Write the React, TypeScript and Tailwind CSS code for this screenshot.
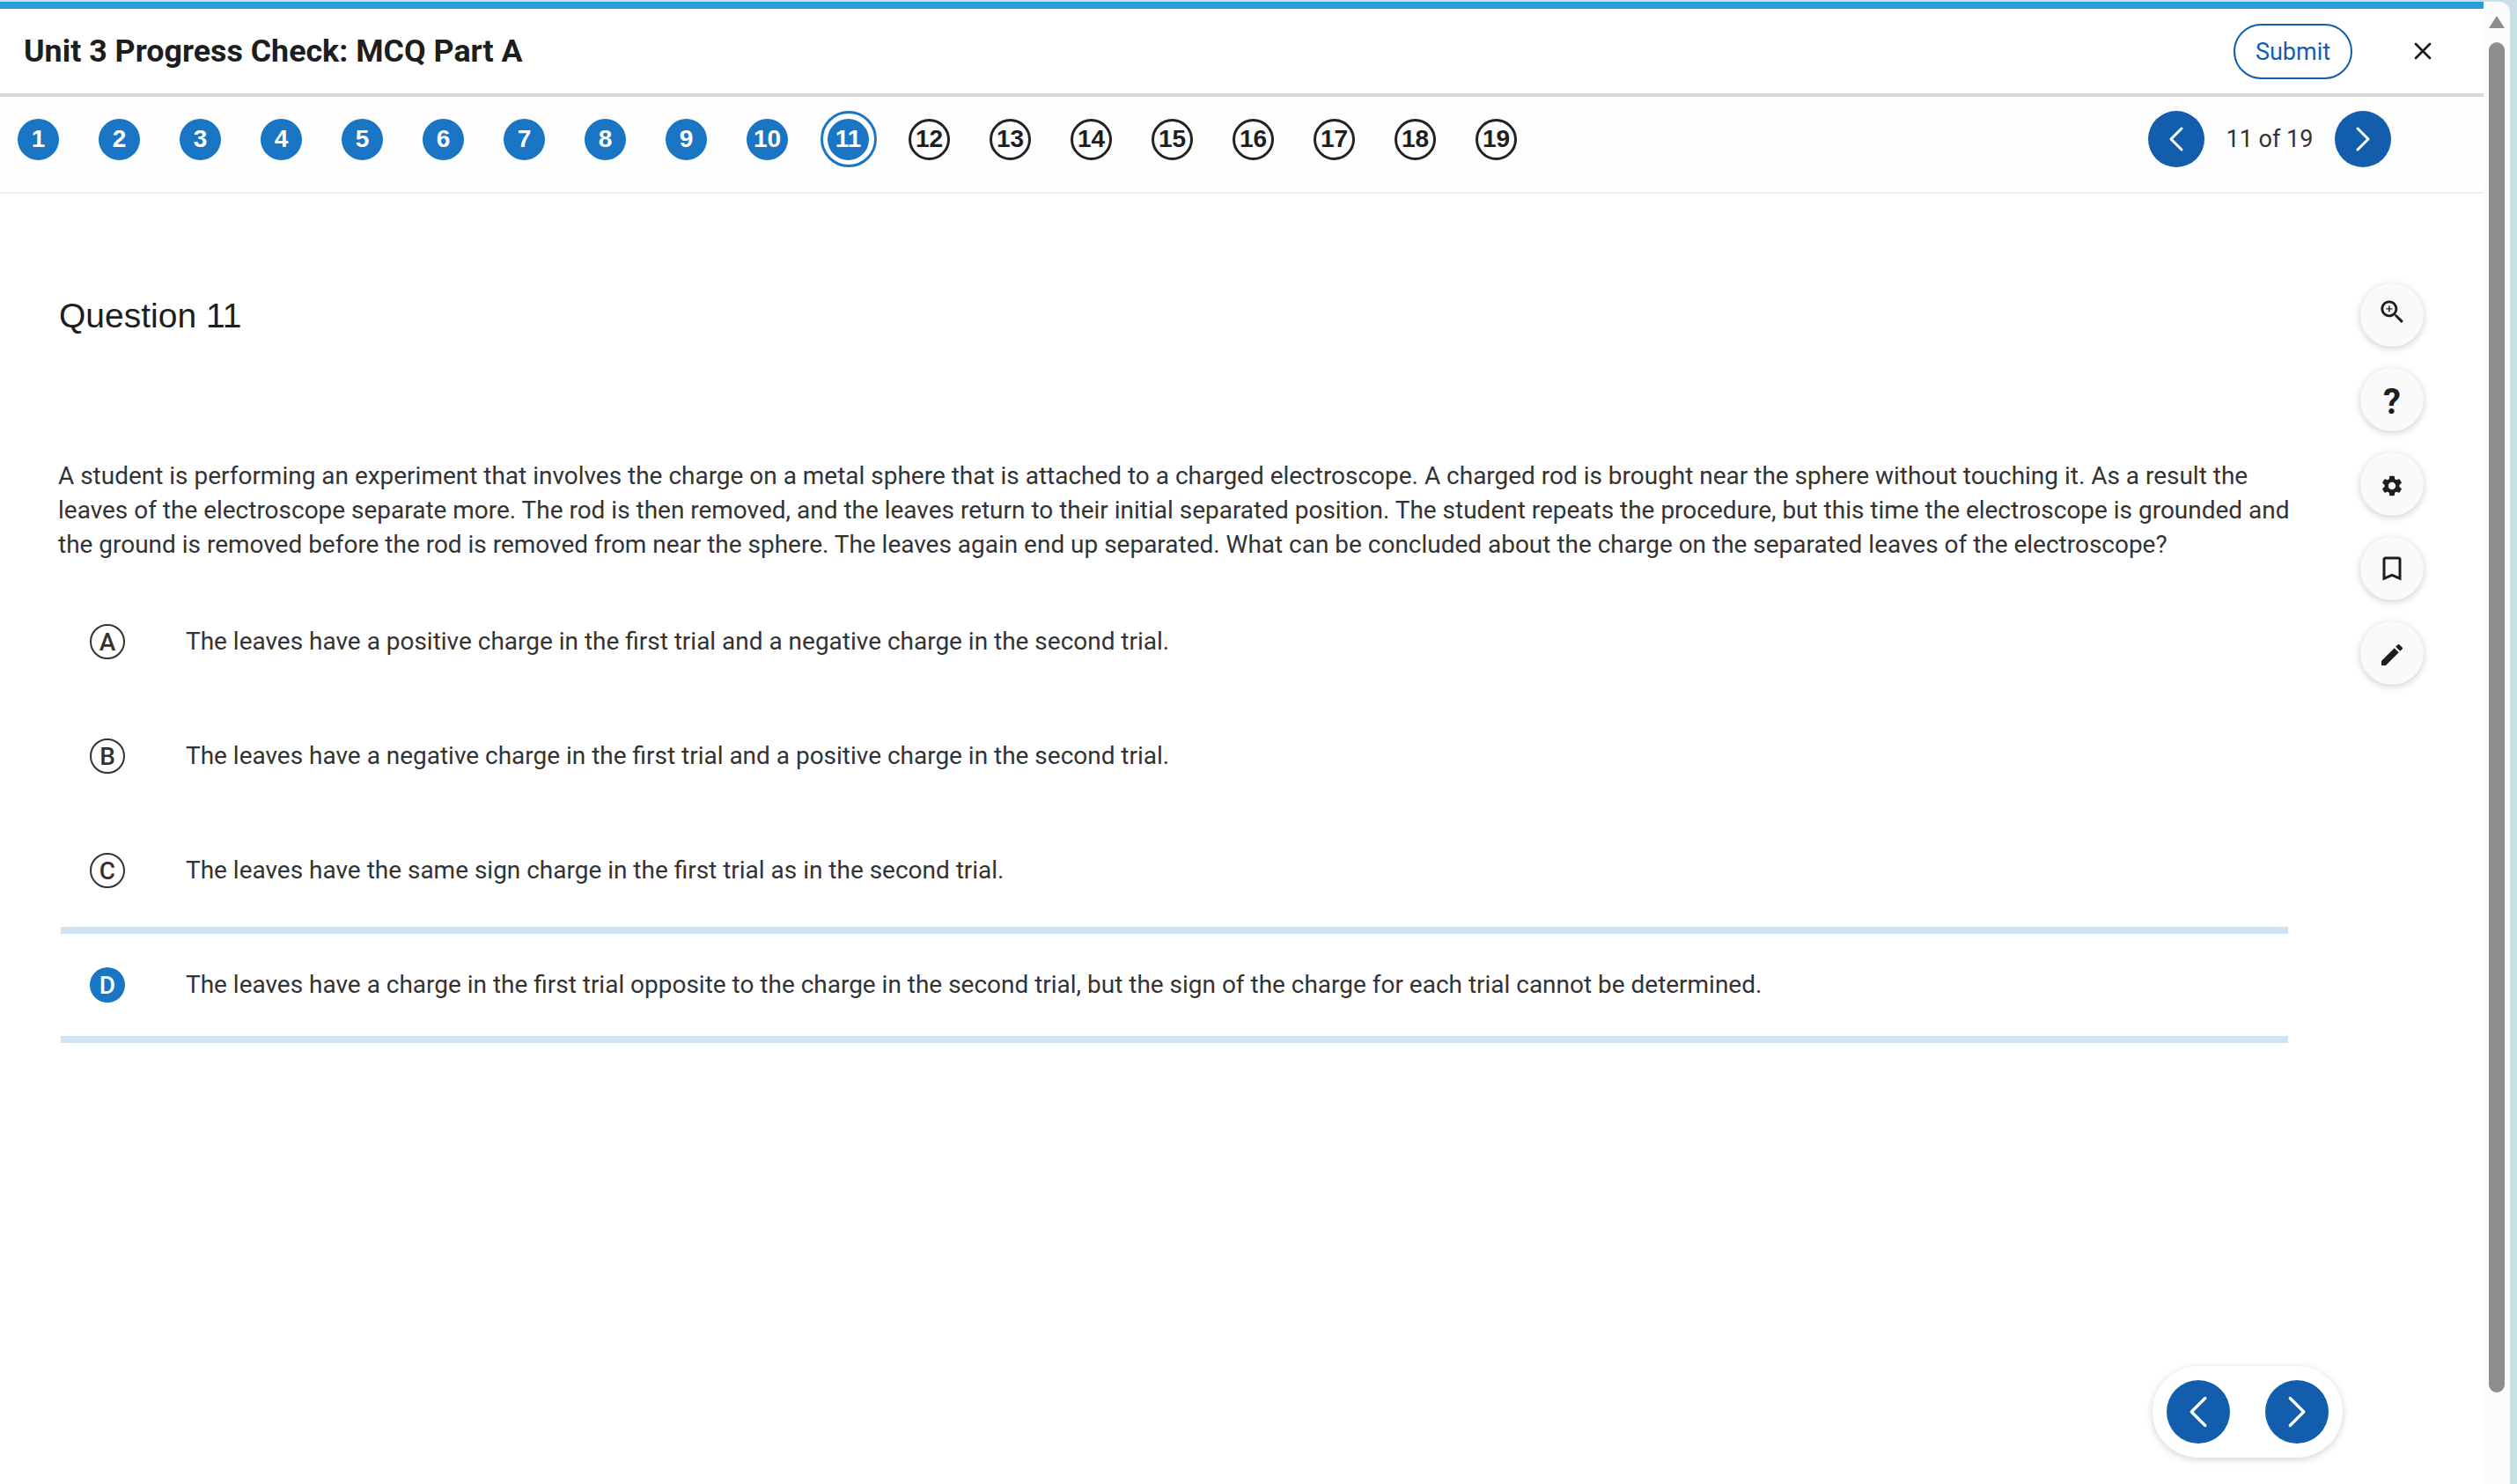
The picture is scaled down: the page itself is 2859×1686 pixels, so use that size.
import { ChevronLeft, ChevronRight, X } from "lucide-react";

const answers = [
  { letter: "A", text: "The leaves have a positive charge in the first trial and a negative charge in the second trial." },
  { letter: "B", text: "The leaves have a negative charge in the first trial and a positive charge in the second trial." },
  { letter: "C", text: "The leaves have the same sign charge in the first trial as in the second trial." },
  {
    letter: "D",
    text: "The leaves have a charge in the first trial opposite to the charge in the second trial, but the sign of the charge for each trial cannot be determined.",
  },
];

const Bubble = ({ n }: { n: number }) => {
  if (n === 11) {
    return (
      <div className="flex h-[64px] w-[64px] shrink-0 items-center justify-center rounded-full border-[3px] border-[#1a75c4] bg-white">
        <div className="flex h-[47px] w-[47px] items-center justify-center rounded-full bg-[#1a75c4] text-white">{n}</div>
      </div>
    );
  }
  return (
    <div
      className={
        n < 11
          ? "flex h-[47px] w-[47px] items-center justify-center rounded-full bg-[#1a75c4] text-white"
          : "flex h-[47px] w-[47px] items-center justify-center rounded-full border-[3px] border-[#222] text-[#1e1e1e]"
      }
    >
      {n}
    </div>
  );
};

const ToolButton = ({ children }: { children: React.ReactNode }) => (
  <div className="flex h-[72px] w-[72px] items-center justify-center rounded-full bg-[#fafafa] text-[#1e1e1e] shadow-[0_2px_8px_rgba(0,0,0,0.2)]">
    {children}
  </div>
);

export default function App() {
  return (
    <div className="flex h-[1686px] w-[2859px] overflow-hidden bg-[#c8dfe5] pt-[2px] font-['Roboto',sans-serif]">
      <div className="flex w-[2821px] flex-col bg-white">
        <div className="h-[8px] bg-[#2a9bdc]" />
        <div className="flex h-[96px] items-center justify-between pl-[27px]">
          <h1 className="pt-[2px] text-[35.8px] font-bold text-[#1e1e1e]">Unit 3 Progress Check: MCQ Part A</h1>
          <div className="flex items-center">
            <div className="flex h-[63px] w-[135px] items-center justify-center rounded-full border-2 border-[#125ead] pt-[2px] text-[27px] text-[#125ead]">
              Submit
            </div>
            <X className="mr-[53px] ml-[64px] text-[#1e1e1e]" size={32} strokeWidth={2} />
          </div>
        </div>
        <div className="h-[4px] bg-[#d8d8d8]" />
        <div className="flex h-[99px] items-center justify-between bg-[#fdfdfd] pr-[105px] pb-[3px] pl-[20px]">
          <div className="flex w-[1719px] items-center gap-[45px] font-['Liberation_Sans',sans-serif] text-[28px] font-bold">
            {Array.from({ length: 19 }, (_, i) => i + 1).map((n) => (
              <div className="flex w-[47px] justify-center" key={n}>
                <Bubble n={n} />
              </div>
            ))}
          </div>
          <div className="flex items-center">
            <div className="flex h-[64px] w-[64px] items-center justify-center rounded-full bg-[#125ead] text-white">
              <ChevronLeft size={48} strokeWidth={1.5} />
            </div>
            <span className="w-[148px] pt-[1px] text-center text-[27px] text-[#333]">11 of 19</span>
            <div className="flex h-[64px] w-[64px] items-center justify-center rounded-full bg-[#125ead] text-white">
              <ChevronRight size={48} strokeWidth={1.5} />
            </div>
          </div>
        </div>
        <div className="mt-[9px] h-[2px] bg-[#eeeeee]" />
        <div className="relative flex-1">
          <div className="w-[2612px] pt-[112px] pl-[66px]">
            <h2 className="ml-[1px] font-['Liberation_Sans',sans-serif] text-[39px] leading-[54px] text-[#1e1e1e]">Question 11</h2>
            <p className="mt-[135px] text-[27.98px] leading-[39px] text-[#333]">
              A student is performing an experiment that involves the charge on a metal sphere that is attached to a charged
              electroscope. A charged rod is brought near the sphere without touching it. As a result the leaves of the
              electroscope separate more. The rod is then removed, and the leaves return to their initial separated position.
              The student repeats the procedure, but this time the electroscope is grounded and the ground is removed before
              the rod is removed from near the sphere. The leaves again end up separated. What can be concluded about the
              charge on the separated leaves of the electroscope?
            </p>
            <div className="mt-[26px] ml-[3px] w-[2530px]">
              {answers.map((a) => (
                <div
                  className={
                    a.letter === "D"
                      ? "-mt-[1px] flex h-[132px] items-center border-y-[8px] border-[#d0e3f2] pl-[33px] text-[27.98px] text-[#333]"
                      : "flex h-[130px] items-center pl-[33px] text-[27.98px] text-[#333]"
                  }
                  key={a.letter}
                >
                  <div
                    className={
                      a.letter === "D"
                        ? "flex h-[40px] w-[40px] shrink-0 items-center justify-center rounded-full bg-[#1a75c4] pt-[2px] font-medium text-white"
                        : "flex h-[40px] w-[40px] shrink-0 items-center justify-center rounded-full border-2 border-[#333] pt-[2px] font-medium"
                    }
                  >
                    {a.letter}
                  </div>
                  <span className="mb-[1px] ml-[69px]">{a.text}</span>
                </div>
              ))}
            </div>
          </div>
          <div className="absolute top-[102px] left-[2681px] flex flex-col gap-[24px]">
            <ToolButton>
              <svg className="mb-[8px]" width="35" height="35" viewBox="0 0 24 24" fill="currentColor">
                <path d="M15.5 14h-.79l-.28-.27C15.41 12.59 16 11.11 16 9.5 16 5.91 13.09 3 9.5 3S3 5.91 3 9.5 5.91 16 9.5 16c1.61 0 3.09-.59 4.23-1.57l.27.28v.79l5 4.99L20.49 19l-4.99-5zm-6 0C7.01 14 5 11.99 5 9.5S7.01 5 9.5 5 14 7.01 14 9.5 11.99 14 9.5 14z" />
                <path d="M12 10h-2v2H9v-2H7V9h2V7h1v2h2v1z" />
              </svg>
            </ToolButton>
            <ToolButton>
              <span className="pt-[6px] text-[40px] font-bold">?</span>
            </ToolButton>
            <ToolButton>
              <svg className="mt-[4px]" width="28" height="28" viewBox="0 0 24 24" fill="currentColor">
                <path d="M19.14 12.94c.04-.3.06-.61.06-.94 0-.32-.02-.64-.07-.94l2.03-1.58c.18-.14.23-.41.12-.61l-1.92-3.32c-.12-.22-.37-.29-.59-.22l-2.39.96c-.5-.38-1.03-.7-1.62-.94l-.36-2.54c-.04-.24-.24-.41-.48-.41h-3.84c-.24 0-.43.17-.47.41l-.36 2.54c-.59.24-1.13.57-1.62.94l-2.39-.96c-.22-.08-.47 0-.59.22L2.74 8.87c-.12.21-.08.47.12.61l2.03 1.58c-.05.3-.09.63-.09.94s.02.64.07.94l-2.03 1.58c-.18.14-.23.41-.12.61l1.92 3.32c.12.22.37.29.59.22l2.39-.96c.5.38 1.03.7 1.62.94l.36 2.54c.05.24.24.41.48.41h3.84c.24 0 .44-.17.47-.41l.36-2.54c.59-.24 1.13-.56 1.62-.94l2.39.96c.22.08.47 0 .59-.22l1.92-3.32c.12-.22.07-.47-.12-.61l-2.01-1.58zM12 15.6c-1.98 0-3.6-1.62-3.6-3.6s1.62-3.6 3.6-3.6 3.6 1.62 3.6 3.6-1.62 3.6-3.6 3.6z" />
              </svg>
            </ToolButton>
            <ToolButton>
              <svg width="36" height="36" viewBox="0 0 24 24" fill="currentColor">
                <path d="M17 3H7c-1.1 0-2 .9-2 2v16l7-3 7 3V5c0-1.1-.9-2-2-2zm0 15l-5-2.18L7 18V5h10v13z" />
              </svg>
            </ToolButton>
            <ToolButton>
              <svg className="mt-[4px]" width="32" height="32" viewBox="0 0 24 24" fill="currentColor">
                <path d="M3 17.25V21h3.75L17.81 9.94l-3.75-3.75L3 17.25zM20.71 7.04c.39-.39.39-1.02 0-1.41l-2.34-2.34c-.39-.39-1.02-.39-1.41 0l-1.83 1.83 3.75 3.75 1.83-1.83z" />
              </svg>
            </ToolButton>
          </div>
          <div className="absolute top-[1332px] left-[2445px] flex h-[104px] w-[216px] items-center justify-between rounded-full bg-white px-[16px] shadow-[0_2px_8px_rgba(0,0,0,0.18)]">
            <div className="flex h-[72px] w-[72px] items-center justify-center rounded-full bg-[#125ead] text-white">
              <ChevronLeft size={62} strokeWidth={1.3} />
            </div>
            <div className="flex h-[72px] w-[72px] items-center justify-center rounded-full bg-[#125ead] text-white">
              <ChevronRight size={62} strokeWidth={1.3} />
            </div>
          </div>
        </div>
      </div>
      <div className="relative w-[30px] rounded-tr-[12px] bg-[#fcfcfc]">
        <div className="absolute top-[16px] left-[6px] h-0 w-0 border-x-[9px] border-b-[14px] border-x-transparent border-b-[#8e8e8e]" />
        <div className="absolute top-[46px] left-[6px] h-[1534px] w-[18px] rounded-full bg-[#8e8e8e]" />
      </div>
      <div className="w-[8px]" />
    </div>
  );
}
